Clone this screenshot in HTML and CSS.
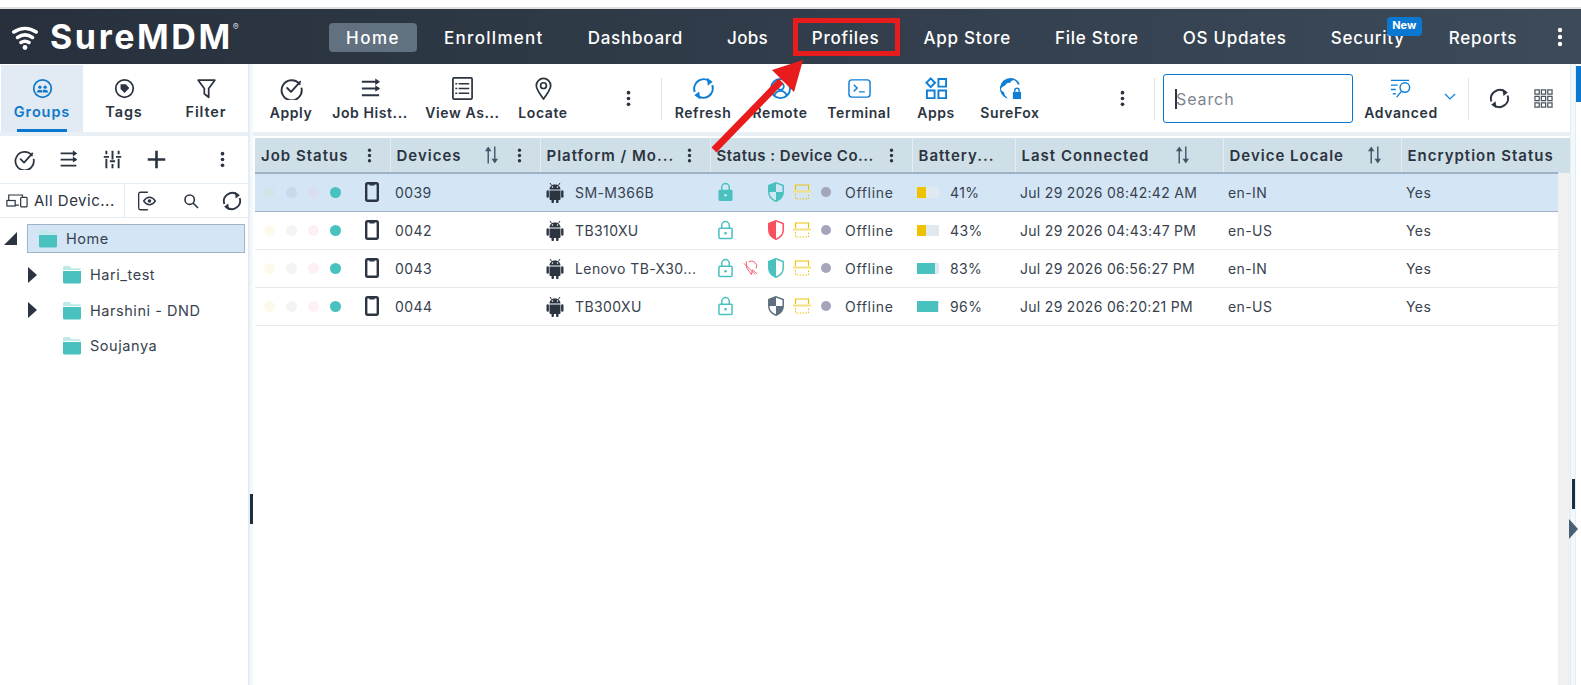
FILE: index.html
```html
<!DOCTYPE html>
<html lang="en">
<head>
<meta charset="UTF-8">
<meta name="viewport" content="width=device-width, initial-scale=1.0">
<title>SureMDM</title>
<link rel="stylesheet" href="styles.css">
</head>
<body>

<svg class="sprite" width="0" height="0">
    <symbol id="i-kebab" viewBox="0 0 6 20"><circle cx="3" cy="3" r="2.2"/><circle cx="3" cy="10" r="2.2"/><circle cx="3" cy="17" r="2.2"/></symbol>
    <symbol id="i-check" viewBox="0 0 24 24"><path d="M20.5 7.500A10.500 10.500 0 1 0 22.500 12" fill="none" stroke="currentColor" stroke-width="2" stroke-linecap="round"/><path d="M7.500 11.500l4 4 9.500-10.500" fill="none" stroke="currentColor" stroke-width="2" stroke-linecap="round" stroke-linejoin="round"/></symbol>
    <symbol id="i-history" viewBox="0 0 24 24"><path d="M3 5h15M3 12h18M3 19h18" fill="none" stroke="currentColor" stroke-width="2"/><path d="M17 1.500l5 3.500-5 3.500zM17 8.500l5 3.500-5 3.500z"/></symbol>
    <symbol id="i-list" viewBox="0 0 24 24"><rect x="2" y="1" width="20" height="22" rx="1" fill="none" stroke="currentColor" stroke-width="1.800"/><path d="M8 7h11M8 12h11M8 17h11M4.500 7h2M4.500 12h2M4.500 17h2" fill="none" stroke="currentColor" stroke-width="1.400"/></symbol>
    <symbol id="i-pin" viewBox="0 0 24 24"><path d="M12 23C7 16 4.500 12.500 4.500 9a7.500 7.500 0 0 1 15 0c0 3.500-2.500 7-7.500 14z" fill="none" stroke="currentColor" stroke-width="1.800" stroke-linejoin="round"/><circle cx="12" cy="9" r="3" fill="none" stroke="currentColor" stroke-width="1.800"/></symbol>
    <symbol id="i-refresh" viewBox="0 0 24 24"><path d="M2.800 15.500A10 10 0 0 1 18.500 4.500M21.200 8.500A10 10 0 0 1 5.500 19.500" fill="none" stroke="currentColor" stroke-width="2.200"/><path d="M15.500 .8l6 4.200-5 4zM8.500 23.200l-6-4.200 5-4z"/></symbol>
    <symbol id="i-remote" viewBox="0 0 24 24"><circle cx="12" cy="12" r="10" fill="none" stroke="currentColor" stroke-width="2"/><circle cx="12" cy="10" r="3.500" fill="none" stroke="currentColor" stroke-width="1.800"/><path d="M5.500 19c1.500-3 3.500-4.500 6.500-4.500s5 1.500 6.500 4.500" fill="none" stroke="currentColor" stroke-width="1.800"/></symbol>
    <symbol id="i-terminal" viewBox="0 0 24 20"><rect x="1" y="1" width="22" height="18" rx="3" fill="none" stroke="currentColor" stroke-width="1.500"/><path d="M6 6l3.500 3.500L6 13M11.500 13.500h6" fill="none" stroke="currentColor" stroke-width="1.500"/></symbol>
    <symbol id="i-apps" viewBox="0 0 24 24"><path d="M6 1.500l4.500 4.500L6 10.500 1.500 6zM14 2h8v8h-8zM2 14h8v8H2zM14 14h8v8h-8z" fill="none" stroke="currentColor" stroke-width="2"/></symbol>
    <symbol id="i-globe" viewBox="0 0 24 24"><path d="M12 1a11 11 0 0 0-3 21.600c-1-2.600-3.500-3-3.500-5.600 0-2-2.500-2-3.500-4 1-4 4-3 5-5s3-2 5-2c0-2 2-3 4-2.500 1 .5 2 1.500 4 4.500 1 0 1.500-.5 2 .5A11 11 0 0 0 12 1z"/><path d="M14.500 15.500h8.500V23h-8.500z"/><path d="M16.500 15.500v-1.500a2.200 2.200 0 0 1 4.500 0v1.500" fill="none" stroke="currentColor" stroke-width="1.500"/></symbol>
    <symbol id="i-advanced" viewBox="0 0 24 20"><path d="M1 1.500h19M1 6.500h7M1 11h5M3 15.500h3" fill="none" stroke="currentColor" stroke-width="1.500"/><circle cx="15.500" cy="9" r="5" fill="none" stroke="currentColor" stroke-width="1.500"/><path d="M12 13l-5 6" fill="none" stroke="currentColor" stroke-width="1.500"/></symbol>
    <symbol id="i-grid" viewBox="0 0 20 20"><path d="M1 1h4.500v4.500H1zM7.750 1h4.500v4.500h-4.500zM14.500 1H19v4.500h-4.500zM1 7.750h4.500v4.500H1zM7.750 7.750h4.500v4.500h-4.500zM14.500 7.750H19v4.500h-4.500zM1 14.500h4.500V19H1zM7.750 14.500h4.500V19h-4.500zM14.500 14.500H19V19h-4.500z" fill="none" stroke="currentColor" stroke-width="1.300"/></symbol>
    <symbol id="i-groups" viewBox="0 0 24 24"><circle cx="12" cy="12" r="10" fill="none" stroke="currentColor" stroke-width="2"/><circle cx="9" cy="10.500" r="1.900"/><circle cx="15" cy="10.500" r="1.900"/><path d="M5.500 16.500c0-2 1.500-3.200 3.500-3.200s3 1 3 3.200zM12.500 16.500c0-1 0-2-.7-2.700.8-.4 1.500-.5 3.200-.5 2 0 3.500 1.200 3.500 3.200z"/></symbol>
    <symbol id="i-tag" viewBox="0 0 24 24"><circle cx="12" cy="12" r="10" fill="none" stroke="currentColor" stroke-width="2"/><path d="M7.500 7h6l4 4.500-5.500 5.500-4.500-4.500z"/></symbol>
    <symbol id="i-filter" viewBox="0 0 24 24"><path d="M2.500 2.500h19L14.500 12v10l-5-4v-6z" fill="none" stroke="currentColor" stroke-width="2" stroke-linejoin="round"/></symbol>
    <symbol id="i-sliders" viewBox="0 0 24 24"><path d="M5 2v4M5 11v11M12 2v10M12 17v5M19 2v4M19 11v11M2 9h6M9 14h6M16 9h6" fill="none" stroke="currentColor" stroke-width="2.200"/></symbol>
    <symbol id="i-plus" viewBox="0 0 24 24"><path d="M12 2v20M2 12h20" fill="none" stroke="currentColor" stroke-width="3"/></symbol>
    <symbol id="i-eye" viewBox="0 0 24 24"><path d="M13 1.500H4a2 2 0 0 0-2 2v17a2 2 0 0 0 2 2h9" fill="none" stroke="currentColor" stroke-width="1.600"/><path d="M8 12c2.500-3.500 4.500-4.500 7-4.500s4.500 1 7 4.500c-2.500 3.500-4.500 4.500-7 4.500S10.500 15.500 8 12z" fill="none" stroke="currentColor" stroke-width="1.600"/><circle cx="15" cy="12" r="2.200"/></symbol>
    <symbol id="i-search" viewBox="0 0 24 24"><circle cx="10" cy="10" r="7" fill="none" stroke="currentColor" stroke-width="2.400"/><path d="M15 15l7.500 7.500" fill="none" stroke="currentColor" stroke-width="2.400"/></symbol>
    <symbol id="i-devices" viewBox="0 0 24 16"><path d="M3 8V2h15v2M10 13h4" fill="none" stroke="currentColor" stroke-width="1.300"/><rect x="1" y="8" width="9" height="6" fill="none" stroke="currentColor" stroke-width="1.300"/><rect x="16" y="4.500" width="7" height="10.500" rx="1" fill="none" stroke="currentColor" stroke-width="1.300"/></symbol>
    <symbol id="i-folder" viewBox="0 0 20 19"><path d="M1 5V2.500A1.500 1.500 0 0 1 2.500 1h5l2 2.200h8A1.500 1.500 0 0 1 19 4.700V5z" fill="#bdeae8"/><path d="M1 6h18v11a1.500 1.500 0 0 1-1.500 1.500h-15A1.500 1.500 0 0 1 1 17z" fill="#48c1bf"/></symbol>
    <symbol id="i-phone" viewBox="0 0 14 20"><rect x="1.200" y="1.200" width="11.600" height="17.600" rx="1.500" fill="none" stroke="currentColor" stroke-width="2.400"/><path d="M4.500 2h5" stroke="currentColor" stroke-width="3"/></symbol>
    <symbol id="i-android" viewBox="0 0 18 21"><path d="M4 1l1.800 2.600M14 1l-1.800 2.600" fill="none" stroke="currentColor" stroke-width="1"/><path d="M3.500 7.500C3.500 4.500 6 2.500 9 2.500s5.500 2 5.500 5zM3.500 8.500h11v8.500a1 1 0 0 1-1 1h-1v2a1.200 1.200 0 0 1-2.400 0v-2H7.900v2a1.200 1.200 0 0 1-2.400 0v-2h-1a1 1 0 0 1-1-1zM.500 9.500a1.200 1.200 0 0 1 2.400 0v5a1.200 1.200 0 0 1-2.400 0zM15.100 9.500a1.200 1.200 0 0 1 2.400 0v5a1.200 1.200 0 0 1-2.400 0z"/><circle cx="6.500" cy="5" r=".8" fill="#fff"/><circle cx="11.500" cy="5" r=".8" fill="#fff"/></symbol>
    <symbol id="i-lock" viewBox="0 0 16 20"><path d="M4 8V5a4 4 0 0 1 8 0v3" fill="none" stroke="currentColor" stroke-width="1.600"/><rect x="1" y="8" width="14" height="11" rx="1" fill="none" stroke="currentColor" stroke-width="1.600"/><circle cx="8" cy="13.500" r="1.400"/></symbol>
    <symbol id="i-lock-on" viewBox="0 0 16 20"><path d="M4 8V5a4 4 0 0 1 8 0v3" fill="none" stroke="currentColor" stroke-width="1.600"/><rect x=".5" y="7.500" width="15" height="12" rx="1.500"/><circle cx="8" cy="13.500" r="1.400" fill="#d4e6f6"/></symbol>
    <symbol id="i-shield-half" viewBox="0 0 16 20"><path d="M8 .8L.8 3.500V10c0 4.500 3.500 7.800 7.200 9.200 3.700-1.400 7.200-4.700 7.200-9.200V3.500z" fill="none" stroke="currentColor" stroke-width="1.500"/><path d="M8 .8L.8 3.500V10c0 4.500 3.500 7.800 7.200 9.200z"/></symbol>
    <symbol id="i-shield-quad" viewBox="0 0 16 20"><path d="M8 .8L.8 3.500V10c0 4.500 3.500 7.800 7.200 9.200 3.700-1.400 7.200-4.700 7.200-9.200V3.500z" fill="none" stroke="currentColor" stroke-width="1.500"/><path d="M8 .8L.8 3.500V10H8zM8 10v9.200c3.700-1.400 7.200-4.700 7.200-9.200z"/></symbol>
    <symbol id="i-sim" viewBox="0 0 18 16"><path d="M2.500 6V1h13v5" fill="none" stroke="#eec200" stroke-width="1.200"/><path d="M0 7.500h18" stroke="#f5df80" stroke-width="2"/><path d="M2.500 10v5h13v-5" fill="none" stroke="#eec200" stroke-width="1" stroke-dasharray="1.500 1.500"/></symbol>
    <symbol id="i-noroam" viewBox="0 0 16 16"><path d="M6 1.500a5.500 5.500 0 0 1 8 7M1 3l12 12M3.500 1L4 8l5 7 1-5 5 4" fill="none" stroke="currentColor" stroke-width="1"/></symbol>
    <symbol id="i-sort" viewBox="0 0 16 20"><path d="M4.500 19V4" stroke="currentColor" stroke-width="1.500"/><path d="M1 6l3.500-5L8 6z"/><path d="M11.500 1v15" stroke="currentColor" stroke-width="1.500"/><path d="M8 14l3.500 5 3.500-5z"/></symbol>
    <symbol id="i-wifi" viewBox="0 0 26 26"><path d="M1.800 8c7-4.800 15.400-4.800 22.400 0M5.500 13.500c5-3.500 10-3.500 15 0M9 18.500c2.800-1.800 5.200-1.800 8 0" fill="none" stroke="currentColor" stroke-width="3.500" stroke-linecap="round"/><circle cx="13" cy="23.500" r="2.400"/></symbol>
</svg>

<div class="topline"></div>

<header class="navbar">
    <div class="logo">
        <svg class="logo-wifi"><use href="#i-wifi"/></svg>
        <span class="logo-text">SureMDM</span><span class="logo-reg">®</span>
    </div>
    <nav class="menu">
        <a class="menu-item active">Home</a>
        <a class="menu-item wide">Enrollment</a>
        <a class="menu-item">Dashboard</a>
        <a class="menu-item narrow">Jobs</a>
        <a class="menu-item">Profiles</a>
        <a class="menu-item">App Store</a>
        <a class="menu-item">File Store</a>
        <a class="menu-item">OS Updates</a>
        <a class="menu-item has-badge">Security<span class="badge">New</span></a>
        <a class="menu-item">Reports</a>
    </nav>
    <svg class="menu-more"><use href="#i-kebab"/></svg>
</header>

<div class="app">
    <aside class="sidebar">
        <div class="tabs">
            <div class="tab active"><svg class="ico"><use href="#i-groups"/></svg><span>Groups</span></div>
            <div class="tab"><svg class="ico"><use href="#i-tag"/></svg><span>Tags</span></div>
            <div class="tab"><svg class="ico"><use href="#i-filter"/></svg><span>Filter</span></div>
        </div>
        <div class="side-tools">
            <svg class="ico"><use href="#i-check"/></svg>
            <svg class="ico"><use href="#i-history"/></svg>
            <svg class="ico"><use href="#i-sliders"/></svg>
            <svg class="ico"><use href="#i-plus"/></svg>
            <svg class="kebab push"><use href="#i-kebab"/></svg>
        </div>
        <div class="side-filter">
            <div class="all-devices"><svg class="ico-devices"><use href="#i-devices"/></svg><span class="ellipsis">All Devic...</span></div>
            <div class="side-actions">
                <svg class="ico-eye"><use href="#i-eye"/></svg>
                <svg class="ico-search"><use href="#i-search"/></svg>
                <svg class="ico-refresh"><use href="#i-refresh"/></svg>
            </div>
        </div>
        <ul class="tree">
            <li class="tree-root"><span class="tree-open"></span>
                <div class="tree-home"><svg class="folder"><use href="#i-folder"/></svg>Home</div>
            </li>
            <li class="tree-row"><span class="tree-caret"></span><svg class="folder"><use href="#i-folder"/></svg>Hari_test</li>
            <li class="tree-row"><span class="tree-caret"></span><svg class="folder"><use href="#i-folder"/></svg>Harshini - DND</li>
            <li class="tree-row"><span class="tree-caret hidden"></span><svg class="folder"><use href="#i-folder"/></svg>Soujanya</li>
        </ul>
    </aside>

    <div class="splitter"><span class="grip"></span></div>

    <main class="main">
        <div class="toolbar">
            <div class="tool w-apply"><svg class="ico"><use href="#i-check"/></svg><span>Apply</span></div>
            <div class="tool w-jobs"><svg class="ico"><use href="#i-history"/></svg><span>Job Hist...</span></div>
            <div class="tool w-view"><svg class="ico"><use href="#i-list"/></svg><span>View As...</span></div>
            <div class="tool w-locate"><svg class="ico"><use href="#i-pin"/></svg><span>Locate</span></div>
            <svg class="kebab kebab-one"><use href="#i-kebab"/></svg>
            <span class="divider div-one"></span>
            <div class="tool blue w-refresh"><svg class="ico"><use href="#i-refresh"/></svg><span>Refresh</span></div>
            <div class="tool blue w-remote"><svg class="ico"><use href="#i-remote"/></svg><span>Remote</span></div>
            <div class="tool blue w-terminal"><svg class="ico"><use href="#i-terminal"/></svg><span>Terminal</span></div>
            <div class="tool blue w-apps"><svg class="ico"><use href="#i-apps"/></svg><span>Apps</span></div>
            <div class="tool blue w-surefox"><svg class="ico"><use href="#i-globe"/></svg><span>SureFox</span></div>
            <svg class="kebab kebab-two"><use href="#i-kebab"/></svg>
            <span class="divider div-two"></span>
            <div class="search"><span class="caret"></span><span class="placeholder">Search</span></div>
            <div class="tool blue w-advanced"><svg class="ico"><use href="#i-advanced"/></svg><span>Advanced</span></div>
            <svg class="chevron" viewBox="0 0 12 8"><path d="M1 1l5 5 5-5" fill="none" stroke="currentColor" stroke-width="1.200"/></svg>
            <span class="divider div-three"></span>
            <svg class="ico tool-refresh"><use href="#i-refresh"/></svg>
            <svg class="ico-grid"><use href="#i-grid"/></svg>
        </div>

        <div class="table-wrap">
            <div class="head-filler"></div>
            <table class="devices">
                <colgroup>
                    <col class="c1"><col class="c2"><col class="c3"><col class="c4"><col class="c5"><col class="c6"><col class="c7"><col class="c8">
                </colgroup>
                <thead>
                    <tr>
                        <th><div class="th"><span class="th-text">Job Status</span><svg class="kebab th-k1"><use href="#i-kebab"/></svg></div></th>
                        <th><div class="th"><span class="th-text">Devices</span><svg class="sort s-dev"><use href="#i-sort"/></svg><svg class="kebab"><use href="#i-kebab"/></svg></div></th>
                        <th><div class="th"><span class="th-text">Platform / Mo...</span><svg class="kebab"><use href="#i-kebab"/></svg></div></th>
                        <th><div class="th"><span class="th-text tight">Status : Device Co...</span><svg class="kebab"><use href="#i-kebab"/></svg></div></th>
                        <th><div class="th"><span class="th-text">Battery...</span></div></th>
                        <th><div class="th"><span class="th-text">Last Connected</span><svg class="sort s-last"><use href="#i-sort"/></svg></div></th>
                        <th><div class="th"><span class="th-text">Device Locale</span><svg class="sort s-loc"><use href="#i-sort"/></svg></div></th>
                        <th><div class="th"><span class="th-text">Encryption Status</span></div></th>
                    </tr>
                </thead>
                <tbody>
                    <tr class="selected">
                        <td><div class="jobs"><i class="dot d1"></i><i class="dot d2"></i><i class="dot d3"></i><i class="dot ok"></i><svg class="phone"><use href="#i-phone"/></svg></div></td>
                        <td>0039</td>
                        <td><div class="model"><svg class="android"><use href="#i-android"/></svg><span>SM-M366B</span></div></td>
                        <td><div class="state"><svg class="lock"><use href="#i-lock-on"/></svg><span class="slot"></span><svg class="shield teal"><use href="#i-shield-quad"/></svg><svg class="sim"><use href="#i-sim"/></svg><i class="off"></i><span>Offline</span></div></td>
                        <td><div class="battery"><span class="bar"><span class="fill low" style="width:41%"></span></span>41%</div></td>
                        <td class="date">Jul 29 2026 08:42:42 AM</td>
                        <td>en-IN</td>
                        <td>Yes</td>
                    </tr>
                    <tr>
                        <td><div class="jobs"><i class="dot"></i><i class="dot"></i><i class="dot"></i><i class="dot ok"></i><svg class="phone"><use href="#i-phone"/></svg></div></td>
                        <td>0042</td>
                        <td><div class="model"><svg class="android"><use href="#i-android"/></svg><span>TB310XU</span></div></td>
                        <td><div class="state"><svg class="lock"><use href="#i-lock"/></svg><span class="slot"></span><svg class="shield red"><use href="#i-shield-half"/></svg><svg class="sim"><use href="#i-sim"/></svg><i class="off"></i><span>Offline</span></div></td>
                        <td><div class="battery"><span class="bar"><span class="fill low" style="width:43%"></span></span>43%</div></td>
                        <td class="date">Jul 29 2026 04:43:47 PM</td>
                        <td>en-US</td>
                        <td>Yes</td>
                    </tr>
                    <tr>
                        <td><div class="jobs"><i class="dot"></i><i class="dot"></i><i class="dot"></i><i class="dot ok"></i><svg class="phone"><use href="#i-phone"/></svg></div></td>
                        <td>0043</td>
                        <td><div class="model"><svg class="android"><use href="#i-android"/></svg><span>Lenovo TB-X30...</span></div></td>
                        <td><div class="state"><svg class="lock"><use href="#i-lock"/></svg><span class="slot"><svg class="noroam"><use href="#i-noroam"/></svg></span><svg class="shield teal"><use href="#i-shield-half"/></svg><svg class="sim"><use href="#i-sim"/></svg><i class="off"></i><span>Offline</span></div></td>
                        <td><div class="battery"><span class="bar"><span class="fill" style="width:83%"></span></span>83%</div></td>
                        <td class="date">Jul 29 2026 06:56:27 PM</td>
                        <td>en-IN</td>
                        <td>Yes</td>
                    </tr>
                    <tr>
                        <td><div class="jobs"><i class="dot"></i><i class="dot"></i><i class="dot"></i><i class="dot ok"></i><svg class="phone"><use href="#i-phone"/></svg></div></td>
                        <td>0044</td>
                        <td><div class="model"><svg class="android"><use href="#i-android"/></svg><span>TB300XU</span></div></td>
                        <td><div class="state"><svg class="lock"><use href="#i-lock"/></svg><span class="slot"></span><svg class="shield slate"><use href="#i-shield-quad"/></svg><svg class="sim"><use href="#i-sim"/></svg><i class="off"></i><span>Offline</span></div></td>
                        <td><div class="battery"><span class="bar"><span class="fill" style="width:96%"></span></span>96%</div></td>
                        <td class="date">Jul 29 2026 06:20:21 PM</td>
                        <td>en-US</td>
                        <td>Yes</td>
                    </tr>
                </tbody>
            </table>
            <div class="vtrack"></div>
        </div>
    </main>

    <div class="splitter right"><span class="grip"></span><span class="expand"></span></div>
    <div class="page-scroll"><span class="page-thumb"></span></div>
</div>

<!-- screenshot annotation drawn on top of the page -->
<div class="callout-box"></div>
<svg class="callout-arrow" viewBox="0 0 1581 685">
    <path d="M714 150L781 81" stroke="#e81c1c" stroke-width="7" fill="none"/>
    <polygon points="803,60 772,70 794,92" fill="#e81c1c"/>
</svg>

</body>
</html>
```

FILE: styles.css
```css
* {
    box-sizing: border-box;
}

html, body {
    margin: 0;
    height: 685px;
    overflow: hidden;
}

body {
    font-family: Inter, "Noto Sans", sans-serif;
    font-size: 14px;
    color: #38424e;
    background: #fff;
    position: relative;
}

svg {
    fill: currentColor;
    display: block;
    flex: none;
}

.sprite {
    position: absolute;
}

.topline {
    height: 9px;
    border-bottom: 2px solid #e0e0e0;
}

/* top bar */
.navbar {
    height: 55px;
    display: flex;
    align-items: center;
    color: #fff;
    background: linear-gradient(90deg, #27303c, #3c4a5a);
}

.logo {
    width: 329px;
    display: flex;
    align-items: center;
    padding-left: 12px;
    flex: none;
}

.logo-wifi {
    width: 26px;
    height: 26px;
    margin-right: 12px;
}

.logo-text {
    font-size: 34px;
    font-weight: 700;
    letter-spacing: 2.600px;
    line-height: 1;
    padding-top: 1px;
}

.logo-reg {
    font-size: 9px;
    margin-top: -20px;
    color: #cfd5db;
}

.menu {
    display: flex;
    align-items: center;
    margin-top: 2px;
}

.menu-item {
    position: relative;
    font-size: 17px;
    font-weight: 500;
    letter-spacing: 0.75px;
    line-height: 28px;
    padding: 1px 22px 0;
    white-space: nowrap;
}

.menu-item.wide {
    letter-spacing: 1.3px;
}

.menu-item.narrow {
    letter-spacing: 0.25px;
}

.menu-item.active {
    background: #627180;
    border-radius: 4px;
    padding: 1px 17px 0;
    margin-right: 5px;
    letter-spacing: 1.5px;
}

.badge {
    position: absolute;
    top: -6px;
    right: 5px;
    width: 35px;
    height: 19px;
    background: #0a78d0;
    border-radius: 4px;
    font-size: 11px;
    font-weight: 700;
    letter-spacing: 0;
    line-height: 17px;
    text-align: center;
}

.menu-more {
    width: 6px;
    height: 20px;
    position: absolute;
    left: 1557px;
    top: 27px;
}

/* page columns */
.app {
    display: flex;
    height: 621px;
    padding-top: 1px;
}

.sidebar {
    width: 248px;
    flex: none;
}

.splitter {
    width: 5px;
    flex: none;
    margin-top: -1px;
    position: relative;
    background: #f2f8fc;
    border-left: 2px solid #e3edf3;
    display: flex;
    justify-content: center;
}

.grip {
    position: absolute;
    left: 0;
    top: 430px;
    width: 3px;
    height: 30px;
    background: #1f2e3c;
}

.main {
    width: 1317px;
    flex: none;
    display: flex;
    flex-direction: column;
}

.splitter.right {
    width: 6px;
    border-left-width: 1px;
    border-right: 1px solid #e3edf3;
}

.splitter.right .grip {
    top: 415px;
    left: 1px;
}

.expand {
    position: absolute;
    left: -2px;
    top: 455px;
    width: 0;
    height: 0;
    border-left: 9px solid #4a6076;
    border-top: 10px solid transparent;
    border-bottom: 10px solid transparent;
}

.page-scroll {
    width: 5px;
    flex: none;
}

.page-thumb {
    display: block;
    height: 36px;
    background: #0a78d0;
    margin-top: 1px;
}

/* sidebar */
.tabs {
    display: flex;
    height: 71px;
    border-bottom: 4px solid #e8f0f5;
    padding-left: 1px;
}

.tab {
    width: 82px;
    height: 67px;
    display: flex;
    flex-direction: column;
    align-items: center;
    padding-top: 13px;
    gap: 4px;
    font-size: 14.500px;
    font-weight: 600;
    letter-spacing: 0.9px;
    color: #2b3440;
    position: relative;
}

.tab .ico {
    width: 21px;
    height: 21px;
}

.tab.active {
    background: #e2ebf3;
    color: #0f78c8;
}

.tab.active::after {
    content: "";
    position: absolute;
    left: 16px;
    right: 16px;
    bottom: 0;
    height: 3px;
    background: #0a78d0;
}

.side-tools {
    height: 48px;
    display: flex;
    align-items: center;
    padding: 0 23px 0 14px;
    gap: 23px;
    color: #2b3440;
    border-bottom: 1px solid #e3edf3;
}

.side-tools .ico {
    width: 21px;
    height: 21px;
}

.push {
    margin-left: auto;
}

.kebab {
    width: 5px;
    height: 17px;
    color: #2b3440;
}

.side-filter {
    height: 34px;
    display: flex;
    align-items: center;
    border-bottom: 1px solid #e3edf3;
    color: #2b3440;
}

.all-devices {
    width: 125px;
    height: 100%;
    display: flex;
    align-items: center;
    gap: 6px;
    padding-left: 6px;
    border-right: 1px solid #e3edf3;
    font-size: 15px;
    letter-spacing: 0.5px;
}

.ico-devices {
    width: 22px;
    height: 15px;
}

.side-actions {
    display: flex;
    align-items: center;
    padding-left: 12px;
}

.ico-eye {
    width: 20px;
    height: 22px;
}

.ico-search {
    width: 16px;
    height: 16px;
    margin-left: 26px;
}

.ico-refresh {
    width: 20px;
    height: 20px;
    margin-left: 23px;
}

.tree {
    list-style: none;
    margin: 0;
    padding: 6px 0 0;
    color: #38424e;
    font-size: 14.500px;
    letter-spacing: 0.55px;
}

.tree-root {
    display: flex;
    align-items: center;
    height: 29px;
    margin-bottom: 4px;
    padding-left: 4px;
}

.tree-open {
    width: 0;
    height: 0;
    border-right: 13px solid #2b3440;
    border-top: 13px solid transparent;
    margin-right: 10px;
}

.tree-home {
    flex: 1;
    height: 29px;
    margin-right: 3px;
    display: flex;
    align-items: center;
    gap: 8px;
    padding-left: 10px;
    background: #d4e6f6;
    border: 1px solid #9fb3c8;
}

.folder {
    width: 20px;
    height: 19px;
}

.tree-row {
    height: 35.500px;
    display: flex;
    align-items: center;
    padding-left: 28px;
    gap: 8px;
}

.tree-caret {
    width: 0;
    height: 0;
    border-left: 9px solid #2b3440;
    border-top: 8.500px solid transparent;
    border-bottom: 8.500px solid transparent;
    margin-right: 17px;
}

.tree-caret.hidden {
    visibility: hidden;
}

/* main toolbar */
.toolbar {
    height: 71px;
    display: flex;
    align-items: center;
    border-bottom: 4px solid #e8f0f5;
    color: #2b3440;
}

.tool {
    flex: none;
    height: 64px;
    display: flex;
    flex-direction: column;
    align-items: center;
    padding-top: 10.500px;
    gap: 4px;
    font-weight: 600;
    font-size: 14px;
    letter-spacing: 0.6px;
    white-space: nowrap;
}

.tool .ico {
    width: 23px;
    height: 23px;
}

.tool.blue .ico {
    color: #0f7fd6;
}

.tool span {
    color: #2b3440;
}

.w-apply { width: 76px; }
.w-jobs { width: 82px; }
.w-view { width: 103px; }
.w-locate { width: 58px; }
.w-refresh { width: 82px; }
.w-remote { width: 72px; }
.w-terminal { width: 86px; }
.w-apps { width: 68px; }
.w-surefox { width: 80px; }
.w-advanced { width: 76px; margin-left: 10px; }

.kebab-one { margin: 0 30px 0 54px; }
.kebab-two { margin: 0 29px 0 70px; }

.divider {
    width: 1px;
    height: 42px;
    flex: none;
    background: #dbe5ec;
}

.div-three {
    margin-left: 7px;
}

.search {
    width: 190px;
    height: 49px;
    flex: none;
    margin-left: 8px;
    display: flex;
    align-items: center;
    padding-left: 11px;
    border: 1px solid #0a78d0;
    border-radius: 3px;
    font-size: 16px;
    letter-spacing: 0.9px;
    color: #7c858f;
}

.caret {
    width: 2px;
    height: 20px;
    background: #2b3440;
    margin-right: -1px;
}

.chevron {
    width: 12px;
    height: 8px;
    margin: -4px 5px 0;
    color: #0f7fd6;
}

.tool-refresh {
    width: 21px;
    height: 21px;
    margin-left: 20px;
}

.ico-grid {
    width: 19px;
    height: 19px;
    margin-left: 24px;
    color: #4a5560;
}

/* devices table */
.table-wrap {
    flex: 1;
    position: relative;
    margin-left: 2px;
    padding-top: 2px;
}

.head-filler {
    position: absolute;
    top: 2px;
    left: 1303px;
    right: 0;
    height: 35px;
    background: #cfdfe7;
}

.vtrack {
    position: absolute;
    top: 37px;
    bottom: 0;
    left: 1303px;
    right: 0;
    background: #f0f0f0;
}

.devices {
    width: 1303px;
    table-layout: fixed;
    border-collapse: collapse;
}

.c1 { width: 135px; }
.c2 { width: 150px; }
.c3 { width: 170px; }
.c4 { width: 202px; }
.c5 { width: 103px; }
.c6 { width: 208px; }
.c7 { width: 178px; }
.c8 { width: 157px; }

.devices th {
    height: 35px;
    padding: 0;
    background: #cfdfe7;
    border-right: 1px solid #e3edf3;
    border-bottom: 2px solid #9fb3c8;
    font-weight: 600;
    text-align: left;
    color: #2b3440;
}

.th {
    display: flex;
    align-items: center;
    padding: 0 0 0 6px;
    position: relative;
    height: 33px;
}

.th-text {
    font-size: 15px;
    letter-spacing: 1px;
    white-space: nowrap;
}

.th-text.tight {
    letter-spacing: 0.5px;
}

.th .kebab {
    position: absolute;
    right: 18px;
    top: 9px;
    height: 15px;
}

.th .sort {
    position: absolute;
    top: 6px;
    width: 15px;
    height: 20px;
    color: #41566a;
}

.s-dev { left: 93px; }
.s-last { left: 159px; }
.s-loc { left: 143px; }

.devices td {
    height: 38px;
    padding: 0 5px;
    border-bottom: 1px solid #e3ebf1;
    font-size: 14px;
    letter-spacing: 0.4px;
    white-space: nowrap;
}

.devices td.date {
    letter-spacing: 0.3px;
}

.devices tr.selected td {
    background: #d4e6f6;
    border-bottom-color: #9fb3c8;
}

.jobs {
    display: flex;
    align-items: center;
    padding-left: 4px;
    gap: 11px;
}

.dot {
    width: 11px;
    height: 11px;
    border-radius: 50%;
    background: #f4f4f4;
}

.dot:first-child { background: #fdfaeb; }
.dot:nth-child(3) { background: #fdf1f3; }
.dot.d1 { background: #d3e4e6; }
.dot.d2 { background: #c9d9e8; }
.dot.d3 { background: #d9dfee; }
.dot.ok { background: #48c1bf; }

.phone {
    width: 14px;
    height: 20px;
    margin-left: 13px;
    color: #2b3440;
}

.model {
    display: flex;
    align-items: center;
    gap: 11px;
    padding-left: 1px;
}

.android {
    width: 18px;
    height: 21px;
    color: #2b3440;
}

.state {
    display: flex;
    align-items: center;
    padding-left: 3px;
}

.state > span:last-child {
    letter-spacing: 0.7px;
}

.lock {
    width: 15px;
    height: 20px;
    color: #48c1bf;
}

.slot {
    width: 35px;
    display: flex;
    justify-content: center;
}

.noroam {
    width: 15px;
    height: 16px;
    color: #f2566a;
}

.shield {
    width: 16px;
    height: 20px;
}

.shield.teal { color: #48c1bf; }
.shield.red { color: #f8505f; }
.shield.slate { color: #5f6f7f; }

.sim {
    width: 18px;
    height: 16px;
    margin-left: 9px;
}

.off {
    width: 10px;
    height: 10px;
    border-radius: 50%;
    background: #a3a6ba;
    margin: 0 14px 0 10px;
}

.battery {
    display: flex;
    align-items: center;
    gap: 11px;
}

.bar {
    width: 22px;
    height: 11px;
    background: #e0e8f0;
    display: block;
}

.fill {
    display: block;
    height: 100%;
    background: #48c1bf;
}

.fill.low {
    background: #eec200;
}

/* annotation over the page */
.callout-box {
    position: absolute;
    left: 793px;
    top: 18px;
    width: 107px;
    height: 38px;
    border: 5px solid #e81c1c;
}

.callout-arrow {
    position: absolute;
    left: 0;
    top: 0;
    width: 1581px;
    height: 685px;
    pointer-events: none;
}
```
